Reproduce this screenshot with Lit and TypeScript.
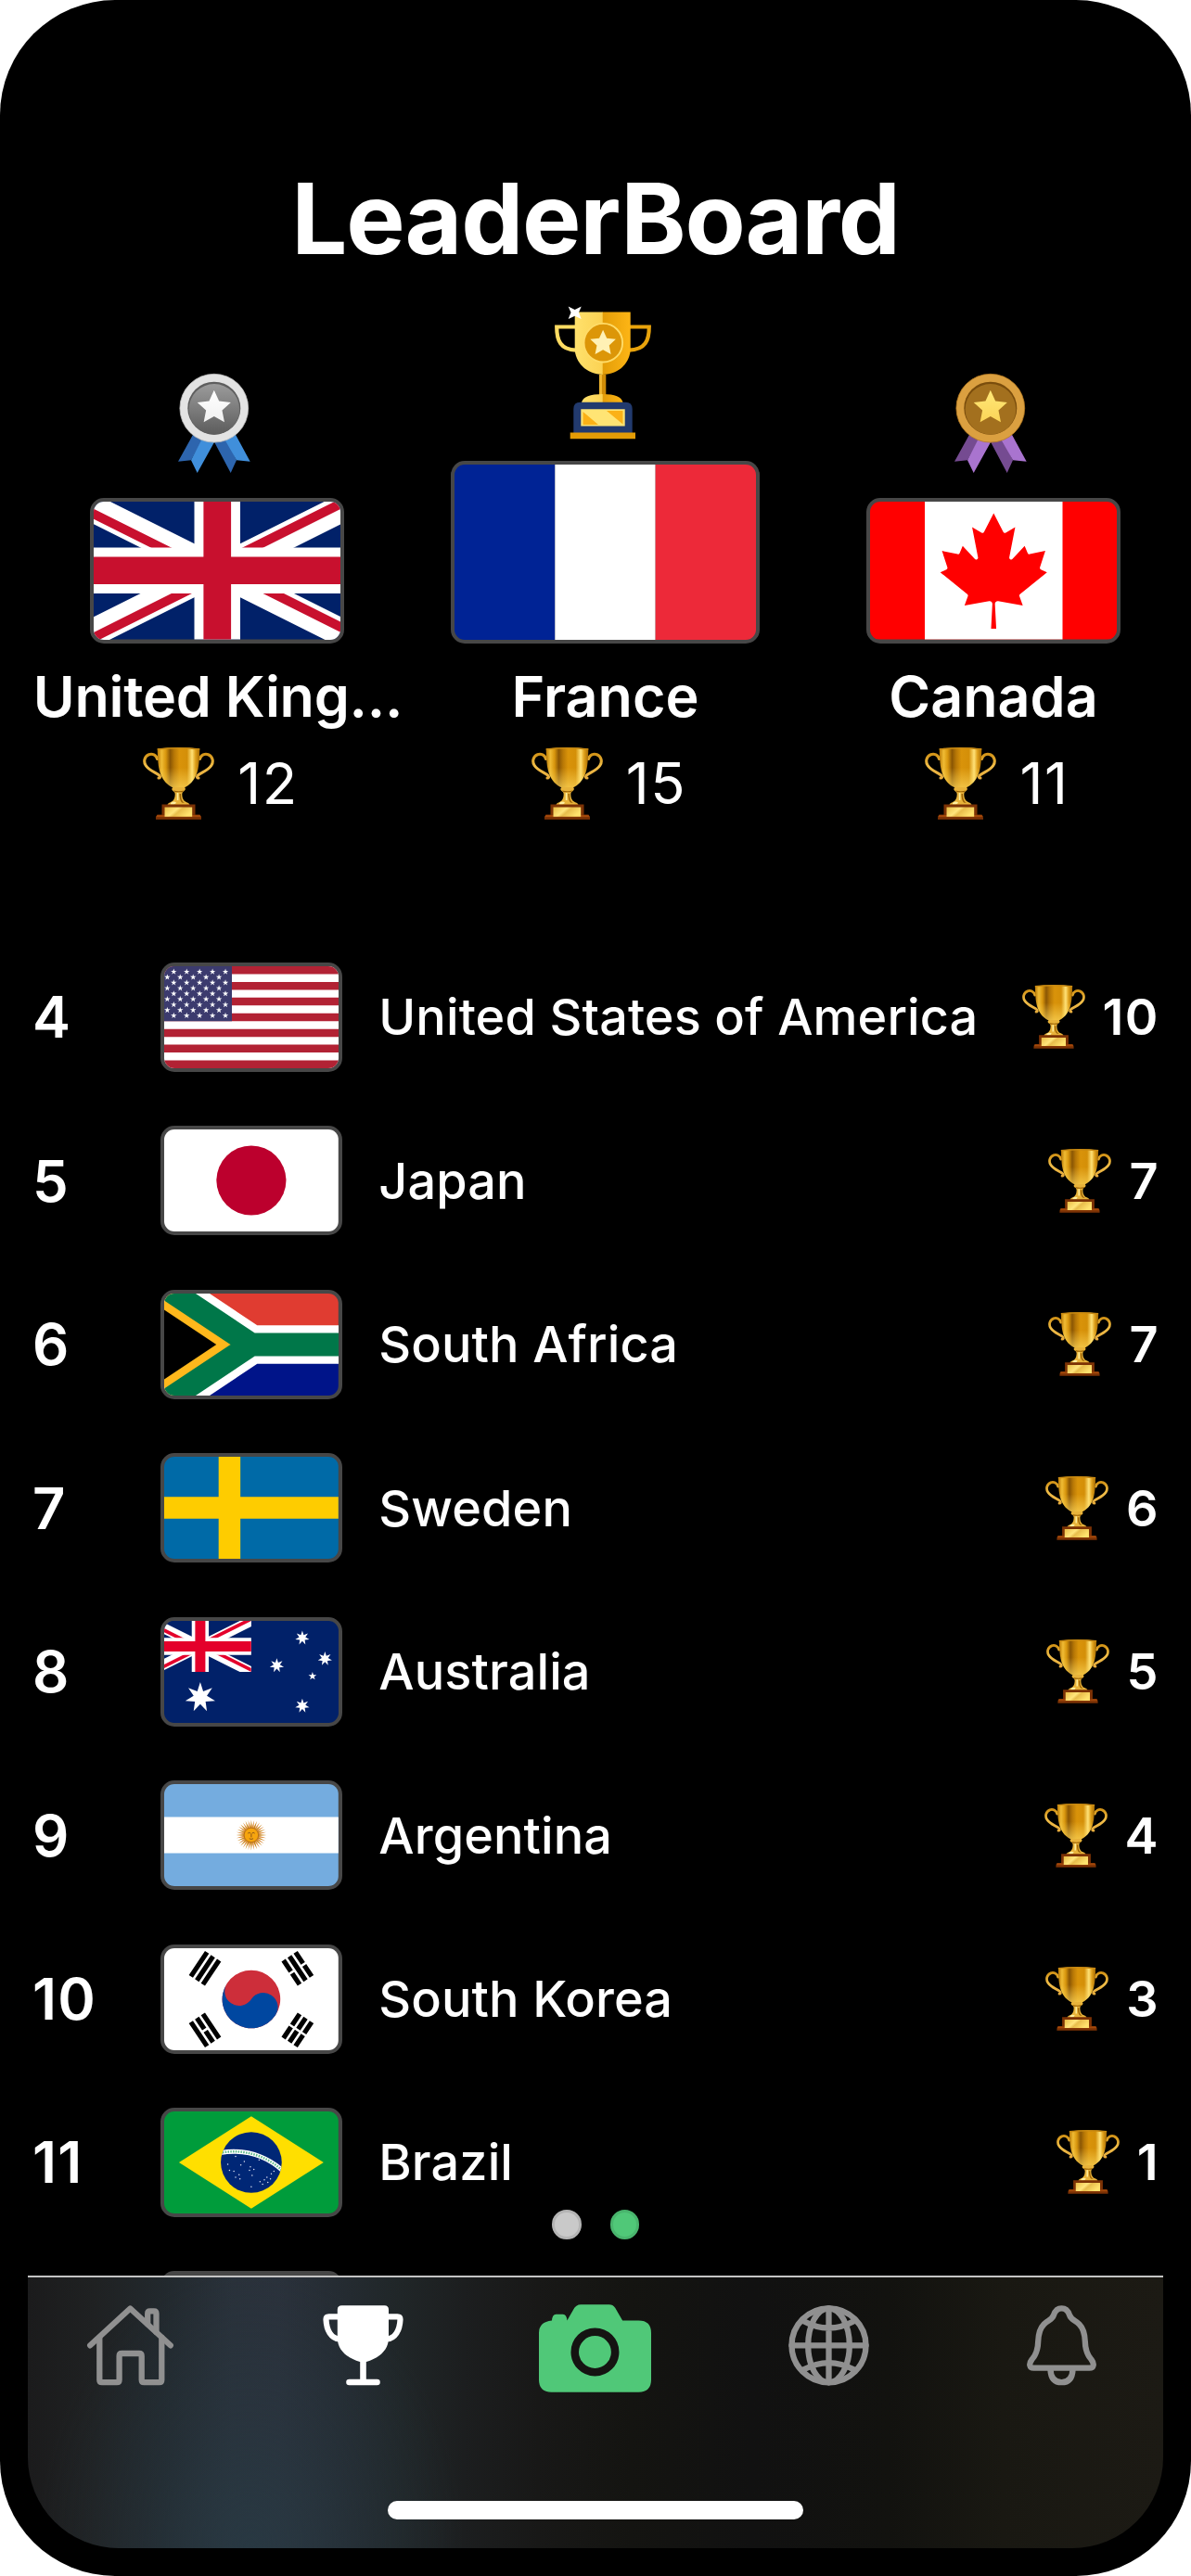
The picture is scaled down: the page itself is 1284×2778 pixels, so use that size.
import { LitElement, html, svg, css, TemplateResult, SVGTemplateResult } from "lit";
import { customElement, property } from "lit/decorators.js";

/** Points of a regular star polygon with its first tip pointing up. */
function star(cx: number, cy: number, r: number, tips = 5, ratio = 0.382): string {
  const pts: string[] = [];
  for (let i = 0; i < tips * 2; i++) {
    const a = (Math.PI * i) / tips - Math.PI / 2;
    const k = i % 2 ? r * ratio : r;
    pts.push(`${(cx + k * Math.cos(a)).toFixed(2)},${(cy + k * Math.sin(a)).toFixed(2)}`);
  }
  return pts.join(" ");
}

interface FlagArt {
  box: string;
  art: SVGTemplateResult;
}

const unionJack = (red: string) => svg`
  <path fill="#012169" d="M0 0h60v30H0z"/>
  <path stroke="#fff" stroke-width="6" d="M0 0l60 30M60 0L0 30"/>
  <clipPath id="jack"><path d="M30 15h30v15zv15H0zH0V0zV0h30z"/></clipPath>
  <path clip-path="url(#jack)" stroke=${red} stroke-width="4" d="M0 0l60 30M60 0L0 30"/>
  <path stroke="#fff" stroke-width="10" d="M30 0v30M0 15h60"/>
  <path stroke=${red} stroke-width="6" d="M30 0v30M0 15h60"/>`;

const usStars = Array.from({ length: 9 }, (_, r) =>
  Array.from({ length: r % 2 ? 5 : 6 }, (_, c) =>
    star((r % 2 ? 12.67 : 6.33) + c * 12.67, 5.4 + r * 5.38, 3.1)
  )
).flat();

const sunRays = Array.from({ length: 32 }, (_, i) => i * 11.25);

const skyDots = [
  [8.2, 6.3], [8.8, 7.3], [9.2, 6.9], [8.0, 8.0], [7.5, 7.9], [8.6, 8.4], [9.9, 7.5], [10.3, 7.8],
  [9.8, 7.9], [10.1, 8.5], [8.2, 8.7], [8.7, 8.9], [11.0, 9.2], [11.5, 9.0], [11.8, 8.7], [12.3, 8.3],
  [12.6, 8.0], [11.9, 9.3], [11.3, 9.5], [12.2, 8.9], [10.9, 6.7], [10.0, 9.8], [7.3, 7.2],
];

const FLAGS: Record<string, FlagArt> = {
  gb: { box: "0 0 60 30", art: unionJack("#c8102e") },
  fr: {
    box: "0 0 3 1.6",
    art: svg`<path fill="#002395" d="M0-1h1v4H0z"/><path fill="#fff" d="M1-1h1v4H1z"/><path fill="#ed2939" d="M2-1h1v4H2z"/>`,
  },
  ca: {
    box: "0 0 9600 4800",
    art: svg`<path fill="#f00" d="M0 0h9600v4800H0z"/><path fill="#fff" d="M2400 0h4800v4800H2400z"/>
      <path fill="#f00" transform="translate(4800 2400)" d="m-90 2030 45-863a95 95 0 0 0-111-98l-859 151 116-320a65 65 0 0 0-20-73l-941-762 212-99a65 65 0 0 0 34-79l-186-572 542 115a65 65 0 0 0 73-38l105-247 423 454a65 65 0 0 0 111-57l-204-1052 327 189a65 65 0 0 0 91-27l332-652 332 652a65 65 0 0 0 91 27l327-189-204 1052a65 65 0 0 0 111 57l423-454 105 247a65 65 0 0 0 73 38l542-115-186 572a65 65 0 0 0 34 79l212 99-941 762a65 65 0 0 0-20 73l116 320-859-151a95 95 0 0 0-111 98l45 863z"/>`,
  },
  us: {
    box: "0 0 190 100",
    art: svg`<path fill="#fff" d="M0 0h190v100H0z"/>
      <path stroke="#b22234" stroke-width="7.69" d="M0 3.85h190M0 19.23h190M0 34.62h190M0 50h190M0 65.38h190M0 80.77h190M0 96.15h190"/>
      <path fill="#3c3b6e" d="M0 0h76v53.85H0z"/>
      ${usStars.map((p) => svg`<polygon fill="#fff" points=${p}/>`)}`,
  },
  jp: { box: "0 0 90 60", art: svg`<path fill="#fff" d="M0 0h90v60H0z"/><circle cx="45" cy="30" r="18" fill="#bc002d"/>` },
  za: {
    box: "0 0 90 60",
    art: svg`<path fill="#e03c31" d="M0 0h90v30H0z"/><path fill="#001489" d="M0 30h90v30H0z"/>
      <path fill="none" stroke="#fff" stroke-width="20" d="M-15-10L45 30L-15 70M45 30H95"/>
      <path fill="#ffb81c" d="M0 0l45 30L0 60z"/><path fill="#000" d="M0 12.02L26.97 30L0 47.98z"/>
      <path fill="none" stroke="#007749" stroke-width="12" d="M-15-10L45 30L-15 70M45 30H95"/>`,
  },
  se: { box: "0 0 16 10", art: svg`<path fill="#006aa7" d="M0 0h16v10H0z"/><path fill="#fecc00" d="M5 0h2v10H5zM0 4h16v2H0z"/>` },
  au: {
    box: "0 0 200 100",
    art: svg`<path fill="#012169" d="M0 0h200v100H0z"/>
      <svg x="0" y="0" width="100" height="50" viewBox="0 0 60 30">${unionJack("#e4002b")}</svg>
      <g fill="#fff">
        <polygon points=${star(50, 75, 15, 7, 0.444)}/><polygon points=${star(150, 83.3, 7.1, 7, 0.444)}/>
        <polygon points=${star(125, 43.75, 7.1, 7, 0.444)}/><polygon points=${star(150, 16.7, 7.1, 7, 0.444)}/>
        <polygon points=${star(172.2, 37.1, 7.1, 7, 0.444)}/><polygon points=${star(160, 54.2, 4.2)}/>
      </g>`,
  },
  ar: {
    box: "0 0 800 500",
    art: svg`<path fill="#74acdf" d="M0 0h800v500H0z"/><path fill="#fff" d="M0 166.7h800v166.6H0z"/>
      <g transform="translate(400 250)">
        ${sunRays.map(
          (a, i) => svg`<path transform="rotate(${a})" fill=${i % 2 ? "#dc8d3c" : "#c9861c"} d="M-4.500 -32L0 -70L4.500 -32z"/>`
        )}
        <circle r="33" fill="#f6a50e" stroke="#b36a10" stroke-width="4"/>
        <path fill="none" stroke="#85501a" stroke-width="4" d="M-16-8q7-7 13 0M3-8q7-7 13 0M0-6v16M-9 16q9 6 18 0"/>
      </g>`,
  },
  kr: {
    box: "-36 -24 72 48",
    art: svg`<path fill="#fff" d="M-36-24h72v48h-72z"/>
      <g transform="rotate(-56.31)">
        <path stroke="#000" stroke-width="2" d="M-6-26H6M-6-23H6M-6-20H6M-6 20H6M-6 23H6M-6 26H6"/>
        <path stroke="#fff" d="M0 18.500v9"/>
        <circle fill="#cd2e3a" r="12"/>
        <path fill="#0047a0" d="M0-12A6 6 0 0 0 0 0A6 6 0 0 1 0 12A12 12 0 0 1 0-12Z"/>
      </g>
      <g transform="rotate(-123.69)">
        <path stroke="#000" stroke-width="2" d="M-6-26H6M-6-23H6M-6-20H6M-6 20H6M-6 23H6M-6 26H6"/>
        <path stroke="#fff" d="M0-24.500v3M0 18.500v3M0 24.500v3"/>
      </g>`,
  },
  br: {
    box: "0 0 20 14",
    art: svg`<path fill="#009c3b" d="M0 0h20v14H0z"/><path fill="#ffdf00" d="M1.7 7L10 1.7L18.3 7L10 12.3z"/>
      <clipPath id="globe"><circle cx="10" cy="7" r="3.5"/></clipPath>
      <circle cx="10" cy="7" r="3.5" fill="#002776"/>
      <g clip-path="url(#globe)" fill="none">
        <circle cx="8" cy="14" r="8.25" stroke="#fff" stroke-width=".52"/>
        <circle cx="8" cy="14" r="8.25" stroke="#5db98a" stroke-width=".26" stroke-dasharray=".16 .14"/>
      </g>
      ${skyDots.map(([x, y]) => svg`<circle cx=${x} cy=${y} r=".08" fill="#dfe6f5"/>`)}`,
  },
  none: { box: "0 0 1 1", art: svg`` },
};

@customElement("country-flag")
export class CountryFlag extends LitElement {
  @property() code = "none";
  static styles = css`
    :host {
      display: block;
      box-sizing: border-box;
      border: 4px solid #474747;
      border-radius: 15px;
      overflow: hidden;
      flex: none;
      background: #474747;
    }
    .art { display: block; width: 100%; height: 100%; border-radius: 11px; }
  `;
  render() {
    const f = FLAGS[this.code];
    return html`<svg class="art" viewBox=${f.box} preserveAspectRatio=${this.code === "fr" ? "xMidYMid meet" : "xMidYMid slice"} overflow="visible">${f.art}</svg>`;
  }
}

@customElement("cup-emoji")
export class CupEmoji extends LitElement {
  static styles = css`
    :host { display: block; flex: none; }
    svg { display: block; width: 100%; height: 100%; }
  `;
  render() {
    return html`<svg viewBox="0 0 77 78">
      <defs>
        <linearGradient id="bowl" x1="0" x2="1">
          <stop offset="0" stop-color="#b87805"/><stop offset=".1" stop-color="#f0bc35"/>
          <stop offset=".2" stop-color="#d8960d"/><stop offset=".3" stop-color="#8a5604"/>
          <stop offset=".4" stop-color="#b87806"/><stop offset=".52" stop-color="#d9930a"/>
          <stop offset=".7" stop-color="#d48f08"/><stop offset=".82" stop-color="#ffe278"/>
          <stop offset=".9" stop-color="#dfa01a"/><stop offset="1" stop-color="#a56a03"/>
        </linearGradient>
        <linearGradient id="glow" x1="0" y1="0" x2="0" y2="1">
          <stop offset=".5" stop-color="#ffdc62" stop-opacity="0"/><stop offset="1" stop-color="#ffdc62" stop-opacity=".65"/>
        </linearGradient>
        <linearGradient id="arm" x1="0" y1="0" x2="0" y2="1">
          <stop offset="0" stop-color="#d39418"/><stop offset=".5" stop-color="#f0bd48"/><stop offset="1" stop-color="#e6ab3c"/>
        </linearGradient>
        <linearGradient id="plate" x1="0" y1="0" x2="1" y2=".4">
          <stop offset="0" stop-color="#e9bd45"/><stop offset=".45" stop-color="#ffe57c"/>
          <stop offset=".6" stop-color="#e8bd4c"/><stop offset="1" stop-color="#ffe26d"/>
        </linearGradient>
      </defs>
      <g fill="none" stroke="url(#arm)" stroke-width="3.1" stroke-linecap="round">
        <path d="M15.5 12.500C14.500 8 10 6.300 6.500 7.700C1.500 9.700 .500 15.500 3.200 19.500C7 25.500 15.500 27.500 18 30.500C19 32 18.500 33 17 33"/>
        <path d="M61.500 12.500C62.500 8 67 6.300 70.500 7.700C75.500 9.700 76.500 15.500 73.800 19.500C70 25.500 61.500 27.500 59 30.500C58 32 58.500 33 60 33"/>
      </g>
      <path fill="url(#bowl)" d="M15.700 1.600Q38.500-1 61.300 1.600C61 13 60.500 21 58.500 27C55.500 36 50 41 44 43.500H33C27 41 21.500 36 18.500 27C16.500 21 16 13 15.700 1.600z"/>
      <path fill="url(#glow)" d="M15.700 1.600Q38.500-1 61.300 1.600C61 13 60.500 21 58.500 27C55.500 36 50 41 44 43.500H33C27 41 21.500 36 18.500 27C16.500 21 16 13 15.700 1.600z"/>
      <path fill="none" stroke="#c98a12" stroke-width="1.600" d="M15.700 2Q38.500-.4 61.300 2"/>
      <path fill="#e8b33a" d="M32.500 43h12.500q2 2-.5 4q-2 1-2.200 3c0 5 1.500 8 5.500 9.500q3 1 2.700 3.500h-24q-.300-2.500 2.700-3.500c4-1.500 5.500-4.500 5.500-9.500q-.2-2-2.200-3q-2.500-2 0-4z"/>
      <path fill="#9a6206" d="M33 46.500q6 1.500 11.500 0l-1.800 1.800h-8zM41 50c0 5 1 8 4 10l-3-.500c-2-2-2.500-6-2.500-9.500z"/>
      <path fill="#fff0a0" d="M30 60q3-2.500 6-.500q-1 2.500-6 2zM36.800 49h1.600v8h-1.600z"/>
      <path fill="#7c3205" d="M20.500 61.500h36v11h5q1.800 1.500 1.500 5.300H14q-.300-3.800 1.500-5.300h5z"/>
      <path fill="#a3480a" d="M15.500 73h46l1 2h-48z"/>
      <path fill="url(#plate)" d="M23.500 64.500h29.700v10.200H23.500z"/>
    </svg>`;
  }
}

const medal = (silver: boolean) => {
  const k = silver ? "silver" : "bronze";
  const c = silver
    ? { rim: "#e3e3e3", edge: "#bdbdbd", hi: "#9b9b9b", lo: "#5c5c5c", shade: "#5e5e5e", s1: "#ffffff", s2: "#f0f0f0", dark: "#2d65ae", light: "#408fdb" }
    : { rim: "#dba040", edge: "#b97c22", hi: "#a3701e", lo: "#a3701e", shade: "#7a4d0c", s1: "#ffe878", s2: "#fbd457", dark: "#754b91", light: "#a974cf" };
  return html`<svg class="medal" viewBox="0 0 78 108">
    <defs>
      <linearGradient id="disc-${k}" x1="0" y1="0" x2="0" y2="1"><stop offset="0" stop-color=${c.hi}/><stop offset="1" stop-color=${c.lo}/></linearGradient>
      <linearGradient id="star-${k}" x1="0" y1="0" x2="0" y2="1"><stop offset="0" stop-color=${c.s1}/><stop offset="1" stop-color=${c.s2}/></linearGradient>
    </defs>
    <path fill=${c.dark} d="M17 65L0 95.700L14 94.300L28 69zM38.700 74L56.700 108L63 94.300L50 68z"/>
    <path fill=${c.light} d="M28 67L14 94.300L20.700 108L39.500 74zM48 68L63 94.300L77.700 95.700L61 65z"/>
    <circle cx="38.800" cy="38.200" r="36.900" fill=${c.rim} stroke=${c.edge} stroke-width=".8"/>
    <circle cx="38.800" cy="38.200" r="28.500" fill=${c.shade}/>
    <circle cx="38.900" cy="39.400" r="27.300" fill="url(#disc-${k})"/>
    <polygon fill="url(#star-${k})" points=${star(38.8, 37.8, 19, 5, 0.48)}/>
  </svg>`;
};

const goldCup = html`<svg class="gold" viewBox="0 0 104 144">
  <defs>
    <linearGradient id="gr" x1="0" x2="1"><stop offset="0" stop-color="#e39d08"/><stop offset="1" stop-color="#fdb515"/></linearGradient>
    <linearGradient id="gl" x1="0" x2="1"><stop offset="0" stop-color="#ffe16c"/><stop offset="1" stop-color="#fbd253"/></linearGradient>
  </defs>
  <path fill="none" stroke="#ffdc62" stroke-width="4.200" d="M23 22.500H2.200C2.200 37 6 47 23 47.700"/>
  <path fill="none" stroke="#e8a30c" stroke-width="4.200" d="M80 22.500H101.800C101.800 37 98 47 80 47.700"/>
  <path fill="url(#gl)" d="M21.700 6.600H52V74C34 74 21.700 60 21.700 46z"/>
  <path fill="url(#gr)" d="M51.700 6.600H81.700V46C81.700 60 70 74 51.700 74z"/>
  <path fill="#d08c06" d="M48 74h7.300v22H48z"/><path fill="#f0b52e" d="M48 74h3v22h-3z"/>
  <path fill="url(#gl)" d="M29 104q2-9 23-9v9z"/><path fill="url(#gr)" d="M73.500 104q-2-9-21.800-9v9z"/>
  <circle cx="52.300" cy="39.700" r="20.800" fill="#dc9608" stroke="#ffdc68" stroke-width="1.900"/>
  <polygon fill="#fff1b5" points=${star(52.1, 40.3, 14.5, 5, 0.48)}/>
  <path fill="#223a6e" d="M20.300 137V111q0-7.300 7.300-7.300H76.400q7.300 0 7.300 7.300V137z"/>
  <path fill="#ffe474" d="M28.300 111.200H75.700V129.600H28.300z"/>
  <path fill="#fbb117" d="M30.500 114L47 128H30.500zM56 113H73.500V127.500z"/>
  <path fill="#e49c06" d="M16.700 136.400H87V143.300H16.700z"/>
  <path fill="#fff" d="M14.700 0.500L21.700 4L28.700 .500L26 7L28.700 14L21.700 10.800L14.700 14L17.500 7z"/>
</svg>`;

interface Winner { code: string; name: string; wins: number; icon: TemplateResult; kind: string }

const WINNERS: Winner[] = [
  { code: "gb", name: "United King...", wins: 12, icon: medal(true), kind: "second" },
  { code: "fr", name: "France", wins: 15, icon: goldCup, kind: "first" },
  { code: "ca", name: "Canada", wins: 11, icon: medal(false), kind: "third" },
];

const RANKS: [number, string, string, number][] = [
  [4, "us", "United States of America", 10],
  [5, "jp", "Japan", 7],
  [6, "za", "South Africa", 7],
  [7, "se", "Sweden", 6],
  [8, "au", "Australia", 5],
  [9, "ar", "Argentina", 4],
  [10, "kr", "South Korea", 3],
  [11, "br", "Brazil", 1],
];

@customElement("tab-bar")
export class TabBar extends LitElement {
  static styles = css`
    :host {
      display: block;
      box-sizing: border-box;
      height: 294.5px;
      border-top: 2px solid #c4c4c4;
      border-radius: 0 0 98px 98px;
      overflow: hidden;
      background:
        radial-gradient(ellipse 230px 300px at 240px 100%, rgba(40, 58, 68, 0.8), rgba(40, 56, 66, 0.35) 50%, rgba(40, 56, 66, 0)),
        linear-gradient(90deg, #1b1b1c 0, #1f2122 70px, #22292e 150px, #29313a 220px, #2a313b 270px, #252c33 330px, #202628 400px, #1c1e1f 470px, #181817 550px, #141411 650px, #111 780px, #12120f 930px, #191812 1050px, #1c1a14 100%);
    }
    .tabs { display: flex; padding-top: 30.5px; height: 96px; }
    .tab { flex: 1; display: flex; justify-content: center; align-items: flex-start; }
    .tab svg { display: block; overflow: visible; fill: none; stroke-linecap: round; stroke-linejoin: round; }
    .line { stroke: #909090; stroke-width: 6.300; }
    .home { width: 93px; height: 87px; margin-right: 23px; }
    .cup { width: 87px; height: 87px; margin-right: 11px; }
    .camera { width: 121px; height: 95px; margin: -1px 1px 0 0; }
    .globe { width: 87px; height: 87px; margin-left: 13px; }
    .bell { width: 75px; height: 87px; margin-left: 26px; }
    .indicator { width: 448px; height: 20.300px; border-radius: 10.200px; background: #fff; margin: 115px auto 0; }
  `;
  render() {
    return html`
      <div class="tabs">
        <div class="tab"><svg class="home line" viewBox="0 0 93 87">
          <path d="M3.200 43.300L46.400 3.500L89.800 43.300"/>
          <path d="M13.300 35V80.500q0 2.700 2.700 2.700H31.900q2.700 0 2.700-2.700V54.700q0-2.700 2.700-2.700H56q2.700 0 2.700 2.700V80.500q0 2.700 2.700 2.700H77.600q2.700 0 2.700-2.700V35"/>
          <path d="M65.200 20.300V8.900q0-2.500 2.500-2.500H72q2.500 0 2.500 2.500V29"/>
        </svg></div>
        <div class="tab"><svg class="cup" viewBox="0 0 87 87">
          <path fill="#fff" d="M20.500 .200H66.500q4.500 0 4.500 4.500V35C71 49 60 57 47 61H40C27 57 15.800 49 15.800 35V4.700q0-4.500 4.700-4.500z"/>
          <path stroke="#fff" stroke-width="6.200" d="M18 12.300H6.500q-3 0-3 3C4 27 9 36 18 36.500M69 12.300H80.500q3 0 3 3C83 27 78 36 69 36.500"/>
          <path stroke="#fff" stroke-width="6.600" d="M43.500 56V83M28.500 83H58.500"/>
        </svg></div>
        <div class="tab"><svg class="camera" viewBox="0 0 121.500 95">
          <path fill="#50c878" d="M0 31q0-12 14-13.500Q14.500 10.500 18.500 10.500H26Q30 10.500 30.500 17.500L37 6Q40 0 45.500 0H76Q80 0 82.500 3.500L90.500 17.500H108q13.500 0 13.500 13.500V81.500Q121.500 95 108 95H13.500Q0 95 0 81.500z"/>
          <circle cx="60.700" cy="51.500" r="21.800" stroke="#151412" stroke-width="8.600"/>
        </svg></div>
        <div class="tab"><svg class="globe line" viewBox="0 0 87 87">
          <circle cx="43.500" cy="43.300" r="40"/><ellipse cx="43.500" cy="43.300" rx="22.300" ry="40"/>
          <path d="M43.500 3.500V83M3.500 43.300H83.500M16 17Q43.500 32 71 17M16 69.600Q43.500 54.600 71 69.600"/>
        </svg></div>
        <div class="tab"><svg class="bell line" viewBox="0 0 75 87">
          <path d="M37.500 3.300C33.500 3.300 30.500 6 29 10.500C27.500 15.500 23 16 18.500 20.500C14 25 12.500 31 12.200 39C12 49 9.500 54 5.500 58.500C2 63 2.500 67.700 7.500 67.700H67.500C72.500 67.700 73 63 69.500 58.500C65.500 54 63 49 62.800 39C62.500 31 61 25 56.500 20.500C52 16 47.500 15.500 46 10.500C44.500 6 41.500 3.300 37.500 3.300z"/>
          <path d="M25.400 69Q26 83.200 37.500 83.200Q49 83.200 49.600 69"/>
        </svg></div>
      </div>
      <div class="indicator"></div>
    `;
  }
}

@customElement("app-root")
export class AppRoot extends LitElement {
  static styles = css`
    :host { display: block; background: #fff; font-family: Inter, "Liberation Sans", sans-serif; color: #fff; }
    .phone {
      position: relative;
      width: 1284px;
      height: 2778px;
      box-sizing: border-box;
      padding: 0 0 30px;
      background: #000;
      border-radius: 124px;
      overflow: hidden;
      display: flex;
      flex-direction: column;
    }
    .content { height: 2453.500px; flex: none; overflow: hidden; box-sizing: border-box; padding-top: 170px; }
    h1 { margin: 0; text-align: center; font-size: 106.500px; line-height: 132px; font-weight: 700; letter-spacing: -1.200px; }
    .podium { display: grid; grid-template-columns: repeat(3, 398px); column-gap: 20.500px; padding-left: 35px; height: 588px; align-items: end; }
    .winner { display: flex; flex-direction: column; align-items: center; min-width: 0; }
    .medal { display: block; width: 78px; height: 108px; margin: 0 6px 27px 0; }
    .gold { display: block; width: 104px; height: 144px; margin: 0 6px 23.500px 0; }
    .winner country-flag { width: 274.500px; height: 156.500px; }
    .first country-flag { width: 333px; height: 196.500px; }
    .title { margin-top: 19.500px; line-height: 76px; font-size: 61px; font-weight: 600; white-space: nowrap; }
    .second .title { letter-spacing: -.250px; padding-left: 2px; }
    .score { display: flex; align-items: center; gap: 25px; height: 90px; margin-top: 11px; padding-left: 8px; font-size: 61.500px; line-height: 90px; letter-spacing: 1.500px; }
    .score cup-emoji { width: 77px; height: 78px; }
    .list { margin-top: 118.600px; }
    .row { display: flex; align-items: center; height: 176.460px; padding: 0 35px; }
    .row country-flag { width: 195.800px; height: 118px; }
    .rank { width: 138px; font-size: 61.500px; font-weight: 600; letter-spacing: 1.200px; }
    .name { margin-left: 39.500px; flex: 1; font-size: 54px; font-weight: 500; white-space: nowrap; letter-spacing: .100px; }
    .row cup-emoji { width: 68px; height: 69px; }
    .wins { margin: 0 -1px 0 19px; font-size: 54px; font-weight: 600; letter-spacing: 1.500px; }
    .peek { padding-left: 173px; }
    .dots { position: absolute; left: 595px; top: 2383px; display: flex; gap: 31px; }
    .dot { width: 31.500px; height: 31.500px; border-radius: 50%; box-sizing: border-box; background: #c9c9c9; border: 3px solid #b4b4b4; }
    .dot.on { background: #50c878; border-color: #49b56d; }
    tab-bar { margin: 0 30px; flex: none; }
  `;

  render() {
    return html`<div class="phone">
      <div class="content">
        <h1>LeaderBoard</h1>
        <div class="podium">
          ${WINNERS.map(
            (w) => html`<div class="winner ${w.kind}">
              ${w.icon}
              <country-flag code=${w.code}></country-flag>
              <div class="title">${w.name}</div>
              <div class="score"><cup-emoji></cup-emoji><span>${w.wins}</span></div>
            </div>`
          )}
        </div>
        <div class="list">
          ${RANKS.map(
            ([rank, code, name, wins]) => html`<div class="row">
              <span class="rank">${rank}</span>
              <country-flag code=${code}></country-flag>
              <span class="name">${name}</span>
              <cup-emoji></cup-emoji>
              <span class="wins">${wins}</span>
            </div>`
          )}
          <div class="row peek"><country-flag></country-flag></div>
        </div>
      </div>
      <tab-bar></tab-bar>
      <div class="dots"><span class="dot"></span><span class="dot on"></span></div>
    </div>`;
  }
}
